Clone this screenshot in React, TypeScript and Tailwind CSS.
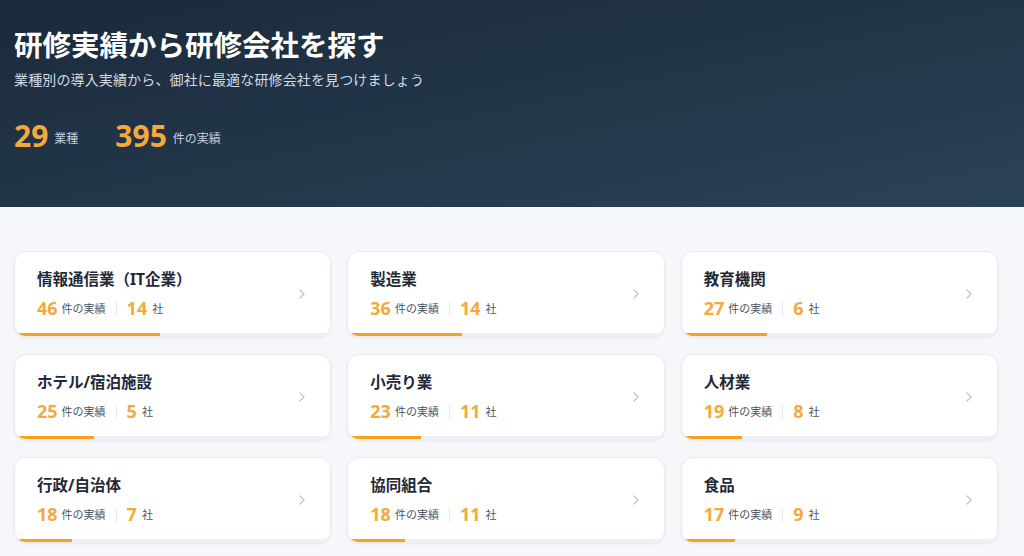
import { ChevronRight } from 'lucide-react';

interface Industry {
  name: string;
  cases: number;
  companies: number;
}

const industries: Industry[] = [
  { name: '情報通信業（IT企業）', cases: 46, companies: 14 },
  { name: '製造業', cases: 36, companies: 14 },
  { name: '教育機関', cases: 27, companies: 6 },
  { name: 'ホテル/宿泊施設', cases: 25, companies: 5 },
  { name: '小売り業', cases: 23, companies: 11 },
  { name: '人材業', cases: 19, companies: 8 },
  { name: '行政/自治体', cases: 18, companies: 7 },
  { name: '協同組合', cases: 18, companies: 11 },
  { name: '食品', cases: 17, companies: 9 },
];

function IndustryCard({ item }: { item: Industry }) {
  return (
    <div className="relative flex h-[86px] items-center overflow-hidden rounded-xl border border-[#e8ebef] bg-white pl-[22px] pr-[20px] shadow-[0_1px_3px_rgba(15,23,42,0.06)]">
      <div className="flex-1">
        <div className="text-[15.5px] font-bold leading-5 text-[#1f2937]">{item.name}</div>
        <div className="mt-[7px] flex items-center">
          <span className="text-[18px] font-bold leading-6 text-[#f6a93b]">{item.cases}</span>
          <span className="ml-[4px] mt-[3px] text-[11px] text-[#4b5563]">件の実績</span>
          <span className="mx-[10px] mt-[2px] h-[14px] w-px bg-[#e5e7eb]" />
          <span className="text-[18px] font-bold leading-6 text-[#f6a93b]">{item.companies}</span>
          <span className="ml-[5px] mt-[3px] text-[11px] text-[#4b5563]">社</span>
        </div>
      </div>
      <ChevronRight className="h-[16px] w-[16px] text-[#c3c8d0]" strokeWidth={2.2} />
      {/* progress bar */}
      <div className="absolute bottom-0 left-0 h-[3px] w-full bg-[#eef0f3]">
        <div className="h-full bg-[#f7a21c]" style={{ width: `${item.cases}%` }} />
      </div>
    </div>
  );
}

export default function App() {
  return (
    <div
      className="min-h-[556px] bg-[#f5f7fa]"
      style={{ fontFamily: '"Noto Sans", "Noto Sans CJK JP", sans-serif' }}
    >
      <div className="h-[207px] bg-gradient-to-br from-[#1b2a3b] to-[#2a4258] px-[14px] pt-[27px]">
        <h1 className="text-[28.5px] font-bold leading-[36px] text-white">研修実績から研修会社を探す</h1>
        <p className="mt-[7px] text-[14px] leading-5 tracking-[0.01em] text-[#d3dae3]">
          業種別の導入実績から、御社に最適な研修会社を見つけましょう
        </p>
        <div className="mt-[28px] flex items-end gap-[37px]">
          <div className="flex items-end">
            <span className="text-[30px] font-bold leading-[36px] text-[#f6a93b]">29</span>
            <span className="mb-[6px] ml-[6px] text-[12px] text-[#c7cfd9]">業種</span>
          </div>
          <div className="flex items-end">
            <span className="text-[30px] font-bold leading-[36px] text-[#f6a93b]">395</span>
            <span className="mb-[6px] ml-[6px] text-[12px] text-[#c7cfd9]">件の実績</span>
          </div>
        </div>
      </div>
      <div className="ml-[14px] mt-[44px] grid w-[984px] grid-cols-3 gap-x-[16px] gap-y-[17px]">
        {industries.map(item => (
          <IndustryCard key={item.name} item={item} />
        ))}
      </div>
    </div>
  );
}
